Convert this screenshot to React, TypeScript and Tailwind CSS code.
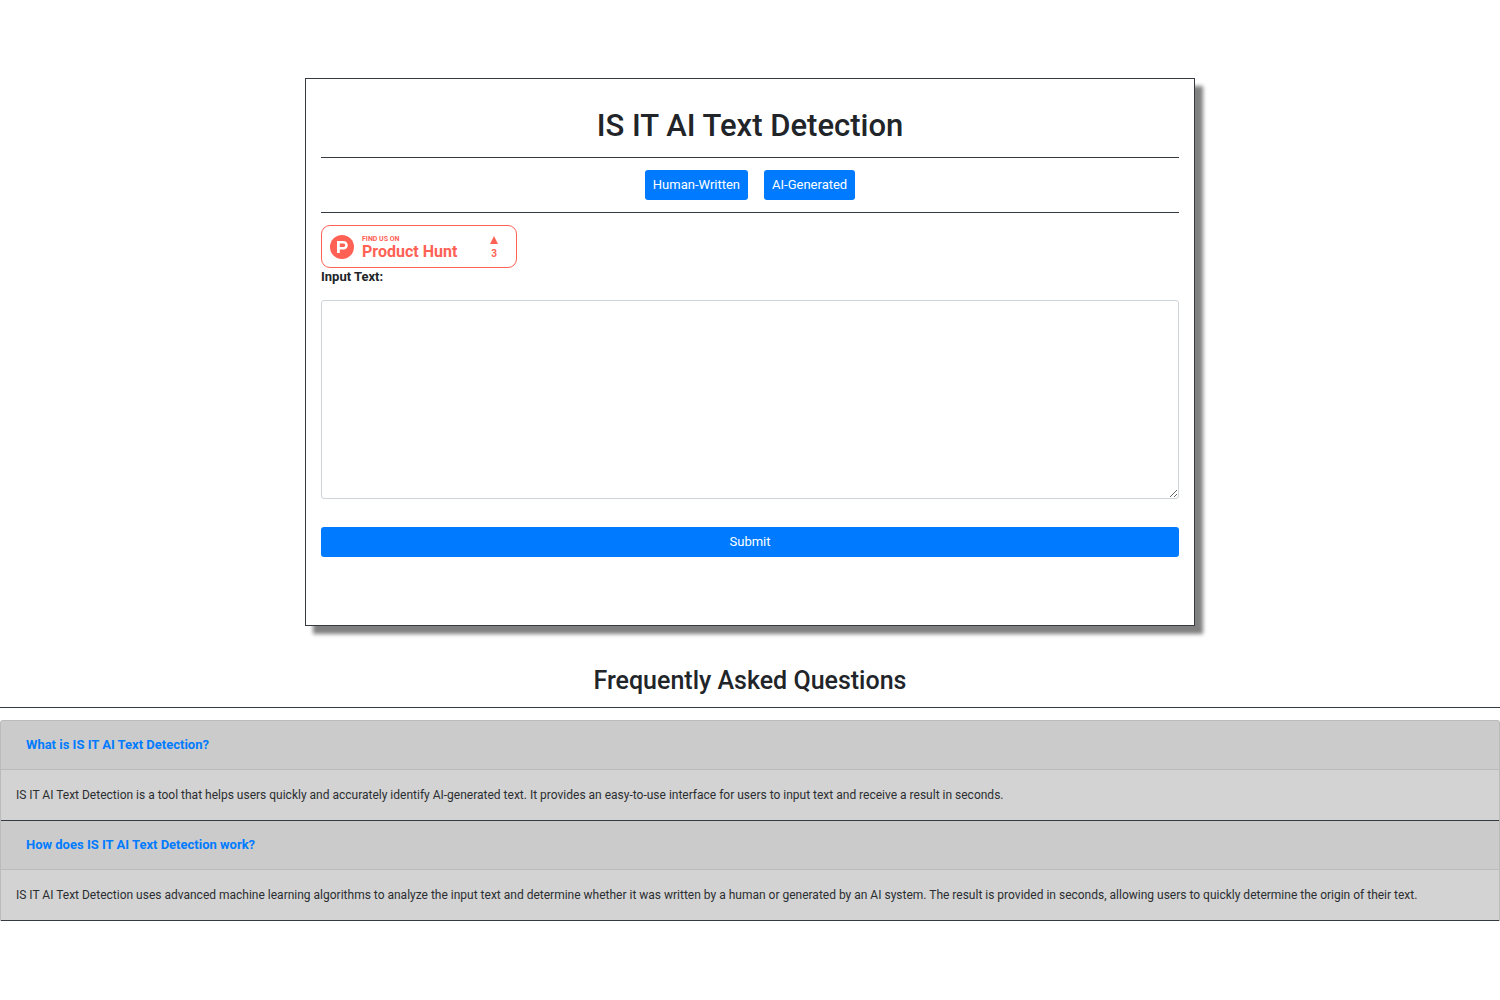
import { useState } from 'react';
import type { FormEvent } from 'react';

const HUMAN_SAMPLE = 'I walked to the shop this morning and forgot why I went there in the first place.';
const AI_SAMPLE = 'Artificial intelligence is a rapidly evolving field with a wide range of applications.';

const faqs = [
  {
    question: 'What is IS IT AI Text Detection?',
    answer:
      'IS IT AI Text Detection is a tool that helps users quickly and accurately identify AI-generated text. It provides an easy-to-use interface for users to input text and receive a result in seconds.',
  },
  {
    question: 'How does IS IT AI Text Detection work?',
    answer:
      'IS IT AI Text Detection uses advanced machine learning algorithms to analyze the input text and determine whether it was written by a human or generated by an AI system. The result is provided in seconds, allowing users to quickly determine the origin of their text.',
  },
];

function ProductHuntBadge() {
  return (
    <a
      href="#product-hunt"
      className="flex h-[43px] w-[196px] items-center rounded-[9px] border border-[#ff6154] pl-2 pr-[18px] text-[#ff6154]"
    >
      <svg className="h-6 w-6 shrink-0" viewBox="0 0 24 24" aria-hidden="true">
        <circle cx="12" cy="12" r="12" fill="currentColor" />
        <path
          fill="#fff"
          fillRule="evenodd"
          d="M7 6h6.500a4.300 4.300 0 0 1 0 8.600H9.800V18H7zM9.800 8.500v3.600h3.700a1.800 1.800 0 0 0 0-3.600z"
        />
      </svg>
      <span className="ml-2 flex flex-1 flex-col pt-[2px] font-bold">
        <span className="text-[7px] leading-[9px]">FIND US ON</span>
        <span className="text-base leading-4">Product Hunt</span>
      </span>
      <span className="flex flex-col items-center gap-1 pt-[2px] text-[10px] leading-3 font-bold">
        <svg className="h-2 w-2" viewBox="0 0 8 8" aria-hidden="true">
          <path fill="currentColor" d="M4 0l4 8H0z" />
        </svg>
        3
      </span>
    </a>
  );
}

export default function App() {
  const [text, setText] = useState('');

  const handleSubmit = (e: FormEvent) => {
    e.preventDefault();
  };

  return (
    <div className="bg-white pt-[78px] pb-20 font-['Roboto',sans-serif] text-[13px] leading-[18px] text-[#212529]">
      {/* Detector */}
      <main className="mx-auto w-full max-w-[890px] border border-[#343a40] px-[15px] pt-[29px] pb-[68px] shadow-[8px_8px_4px_#808080]">
        <h1 className="text-center text-[31px] leading-9 font-medium">IS IT AI Text Detection</h1>

        <div className="mt-[13px] flex justify-center gap-4 border-y border-[#343a40] py-3">
          <button
            type="button"
            onClick={() => setText(HUMAN_SAMPLE)}
            className="h-[30px] rounded-[3px] bg-[#007bff] px-2 text-white"
          >
            Human-Written
          </button>
          <button
            type="button"
            onClick={() => setText(AI_SAMPLE)}
            className="h-[30px] rounded-[3px] bg-[#007bff] px-2 text-white"
          >
            AI-Generated
          </button>
        </div>

        <form onSubmit={handleSubmit} className="pt-3">
          <ProductHuntBadge />
          <label htmlFor="input-text" className="block font-bold">
            Input Text:
          </label>
          <textarea
            id="input-text"
            value={text}
            onChange={(e) => setText(e.target.value)}
            className="mt-[14px] block h-[199px] w-full resize rounded-[3px] border border-[#ced4da] px-[10px] py-[5px]"
          />
          <button type="submit" className="mt-7 block h-[30px] w-full rounded-[3px] bg-[#007bff] text-white">
            Submit
          </button>
        </form>
      </main>

      {/* FAQ */}
      <section>
        <h2 className="mt-[38px] border-b border-[#343a40] pb-[9px] text-center text-[25px] leading-[34px] font-medium">
          Frequently Asked Questions
        </h2>
        <div className="mt-3 overflow-hidden rounded-t-[3px] border-x border-t border-[#bbb] bg-[#d3d3d3]">
          {faqs.map((faq) => (
            <article key={faq.question} className="border-b border-[#343a40]">
              <h3 className="flex h-[49px] items-center border-b border-[#bbb] bg-[#cbcbcb] px-[25px] font-bold">
                <button type="button" className="text-[#007bff]">
                  {faq.question}
                </button>
              </h3>
              <p className="px-[15px] py-4 text-xs leading-[18px] text-[#2b2e31]">{faq.answer}</p>
            </article>
          ))}
        </div>
      </section>
    </div>
  );
}
